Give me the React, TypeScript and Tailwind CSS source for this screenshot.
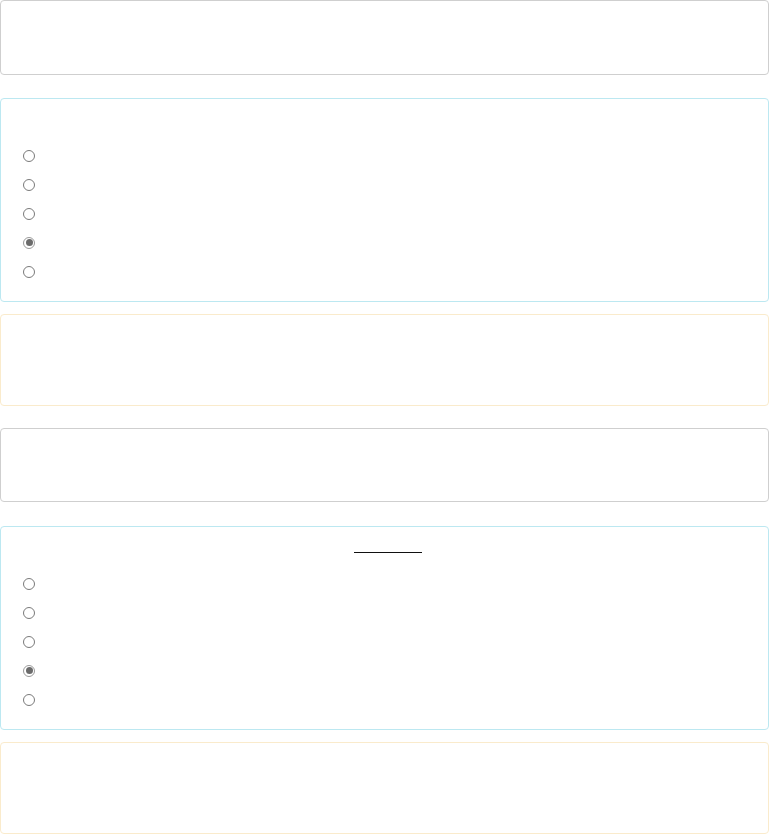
export default function App() {
  const choices = [0, 1, 2, 3, 4];

  return (
    <div className="min-h-screen bg-white font-['Liberation_Sans',sans-serif] text-white">
      <div className="h-[75px] rounded-[4px] border border-[#cfcfcf] bg-white" />

      <div className="mt-[23px] rounded-[4px] border border-[#bce8f1] bg-white pt-[42px] pb-[15px]">
        <QuestionChoices checked={3} choices={choices} />
      </div>

      <div className="mt-[12px] h-[92px] rounded-[4px] border border-[#faebcc] bg-white" />

      <div className="mt-[22px] h-[74px] rounded-[4px] border border-[#cfcfcf] bg-white" />

      <div className="mt-[24px] rounded-[4px] border border-[#bce8f1] bg-white pb-[15px]">
        <div className="h-[42px] pl-[353px] pt-[9px]">
          <span className="inline-block h-[15px] w-[68px] border-b border-[#111]" />
        </div>
        <QuestionChoices checked={3} choices={choices} />
      </div>

      <div className="mt-[12px] h-[92px] rounded-[4px] border border-[#faebcc] bg-white" />
    </div>
  );
}

interface QuestionChoicesProps {
  checked: number;
  choices: number[];
}

function QuestionChoices({ checked, choices }: QuestionChoicesProps) {
  return (
    <ul className="pl-[22px]">
      {choices.map((c) => (
        <li key={c} className="flex h-[29px] items-center">
          {c === checked ? (
            <span className="flex h-[12px] w-[12px] items-center justify-center rounded-full border border-[#9a9a9a] bg-white">
              <span className="h-[7px] w-[7px] rounded-full bg-[#6b6b6b]" />
            </span>
          ) : (
            <span className="h-[12px] w-[12px] rounded-full border border-[#7a7a7a] bg-white" />
          )}
        </li>
      ))}
    </ul>
  );
}
